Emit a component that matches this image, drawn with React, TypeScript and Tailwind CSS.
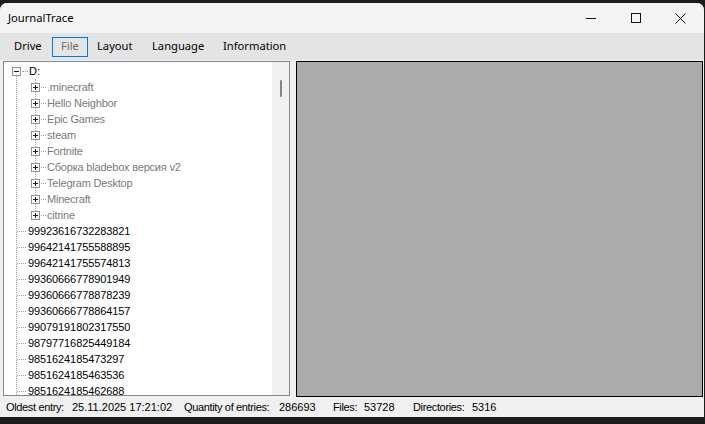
import React from 'react';

const folders = [
  '.minecraft',
  'Hello Neighbor',
  'Epic Games',
  'steam',
  'Fortnite',
  'Сборка bladebox версия v2',
  'Telegram Desktop',
  'Minecraft',
  'citrine',
];

const entries = [
  '99923616732283821',
  '99642141755588895',
  '99642141755574813',
  '99360666778901949',
  '99360666778878239',
  '99360666778864157',
  '99079191802317550',
  '98797716825449184',
  '9851624185473297',
  '9851624185463536',
  '9851624185462688',
];

// little +/- box used by the tree view
function ExpandBox({ open }: { open?: boolean }) {
  return (
    <svg width="9" height="9" viewBox="0 0 9 9" className="shrink-0">
      <rect x="0.5" y="0.5" width="8" height="8" fill="#fff" stroke="#919191" />
      <line x1="2" y1="4.5" x2="7" y2="4.5" stroke="#1e1e1e" />
      {!open && <line x1="4.5" y1="2" x2="4.5" y2="7" stroke="#1e1e1e" />}
    </svg>
  );
}

function StatusItem({ label, value, labelW, valueW }: { label: string; value: string; labelW: string; valueW: string }) {
  return (
    <>
      <span className={`${labelW} shrink-0 tracking-[-0.35px]`}>{label}</span>
      <span className={`${valueW} shrink-0`}>{value}</span>
    </>
  );
}

export default function App() {
  return (
    <div className="w-[705px] h-[424px] bg-[#1c1c1c] flex flex-col overflow-hidden font-['Liberation_Sans',Arial,sans-serif]">
      <div className="h-[3px] shrink-0" />
      <div className="flex-1 flex flex-col bg-[#f0f0f0] rounded-t-[7px] overflow-hidden mr-[1px]">
        {/* Title bar */}
        <div className="h-[30px] shrink-0 bg-[#f3f3f3] flex items-center font-['Noto_Sans',sans-serif] text-[11.2px] text-black">
          <span className="pl-[8px] flex-1">JournalTrace</span>
          <div className="flex items-center h-full">
            <div className="w-[45px] h-full flex items-center justify-center">
              <svg width="10" height="10" viewBox="0 0 10 10">
                <line x1="0" y1="5.5" x2="10" y2="5.5" stroke="#111" />
              </svg>
            </div>
            <div className="w-[45px] h-full flex items-center justify-center">
              <svg width="10" height="10" viewBox="0 0 10 10">
                <rect x="0.5" y="0.5" width="9" height="9" fill="none" stroke="#111" />
              </svg>
            </div>
            <div className="w-[45px] h-full flex items-center justify-center mr-[1px]">
              <svg width="11" height="11" viewBox="0 0 11 11">
                <path d="M0.5 0.5 L10.5 10.5 M10.5 0.5 L0.5 10.5" stroke="#111" />
              </svg>
            </div>
          </div>
        </div>

        {/* Menu bar */}
        <div className="h-[27px] shrink-0 bg-[#e4e4e4] flex items-center font-['Noto_Sans',sans-serif] text-[11.2px] text-black">
          <div className="w-[46px] ml-[6px] pl-[8px]">Drive</div>
          <div className="w-[36px] h-[20px] border border-[#0078d7] pl-[8px] flex items-center text-[#6d6d6d]">File</div>
          <div className="w-[57px] pl-[9px]">Layout</div>
          <div className="w-[71px] pl-[7px]">Language</div>
          <div className="pl-[7px]">Information</div>
        </div>

        {/* Main */}
        <div className="h-[337px] shrink-0 flex pt-[1px] pl-[3px]">
          <div className="w-[287px] h-[335px] border border-[#828790] bg-white flex overflow-hidden">
            <div className="flex-1 relative pt-[1px] text-[11px] overflow-hidden">
              {/* root vertical line */}
              <div className="absolute left-[12px] top-[14px] bottom-0 border-l border-dotted border-[#a0a0a0]" />
              {/* children vertical line */}
              <div className="absolute left-[31px] top-[17px] h-[136px] border-l border-dotted border-[#a0a0a0]" />

              <div className="h-4 flex items-center pl-[8px]">
                <ExpandBox open />
                <span className="w-[6px] border-t border-dotted border-[#a0a0a0] ml-[1px]" />
                <span className="ml-[1px] text-black">D:</span>
              </div>
              {folders.map((f) => (
                <div key={f} className="h-4 flex items-center pl-[27px]">
                  <div className="relative z-10"><ExpandBox /></div>
                  <span className="w-[5px] border-t border-dotted border-[#a0a0a0] ml-[1px]" />
                  <span className="ml-[1px] text-[#7a7a7a] whitespace-nowrap tracking-[-0.2px]">{f}</span>
                </div>
              ))}
              {entries.map((e) => (
                <div key={e} className="h-4 flex items-center pl-[13px]">
                  <span className="w-[9px] border-t border-dotted border-[#a0a0a0]" />
                  <span className="ml-[2px] text-black tracking-[-0.1px]">{e}</span>
                </div>
              ))}
            </div>
            {/* scrollbar */}
            <div className="w-[17px] bg-[#f0f0f0] flex justify-center pt-[18px]">
              <div className="w-[2px] h-[17px] bg-[#858585] rounded-full" />
            </div>
          </div>
          <div className="w-[407px] h-[336px] ml-[6px] border border-black bg-[#ababab]" />
        </div>

        {/* Status bar */}
        <div className="h-[20px] shrink-0 flex items-center text-[11px] text-black pl-[6px] whitespace-nowrap">
          <StatusItem label="Oldest entry:" value="25.11.2025 17:21:02" labelW="w-[66px]" valueW="w-[112px]" />
          <StatusItem label="Quantity of entries:" value="286693" labelW="w-[95px]" valueW="w-[54px]" />
          <StatusItem label="Files:" value="53728" labelW="w-[31px]" valueW="w-[49px]" />
          <StatusItem label="Directories:" value="5316" labelW="w-[59px]" valueW="w-[40px]" />
        </div>
      </div>
      <div className="h-[7px] shrink-0" />
    </div>
  );
}
